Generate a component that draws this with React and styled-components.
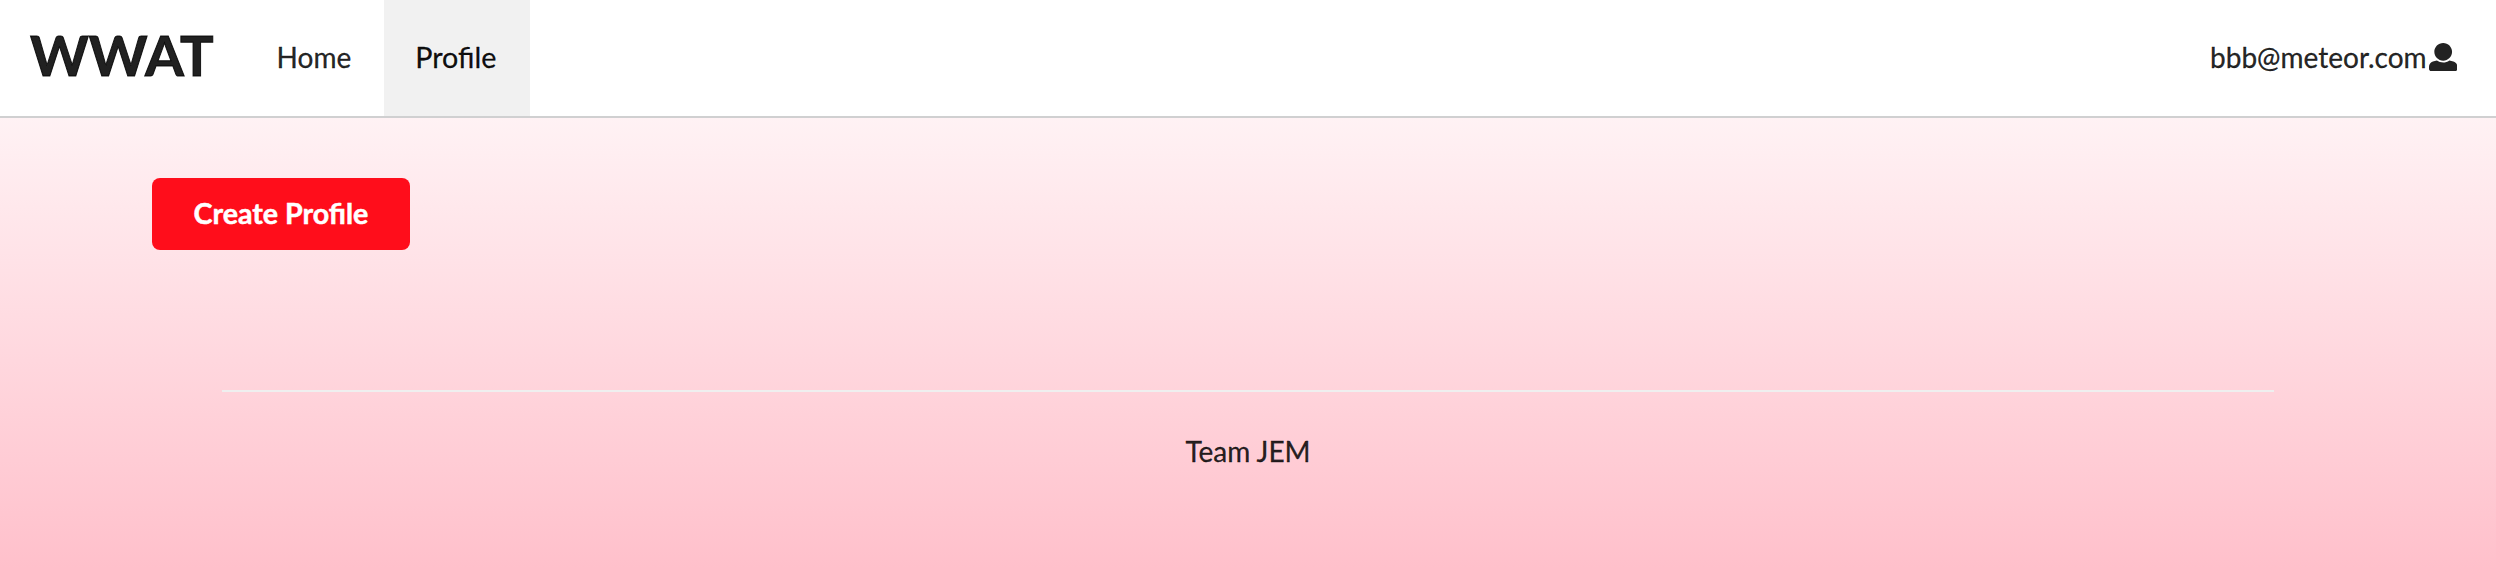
import React from 'react';
import styled, { createGlobalStyle } from 'styled-components';

const Global = createGlobalStyle`
  * { box-sizing: border-box; }
  body { margin: 0; font-family: Lato, "Liberation Sans", sans-serif; font-size: 28px; color: rgba(0,0,0,.87); }
`;
const Page = styled.div`
  height: 568px;
  background: linear-gradient(#ffffff, #ffc0cb);
  overflow: hidden;
`;
const Nav = styled.nav`
  display: flex;
  height: 118px;
  background: #fff;
  border-bottom: 2px solid #d0d0d1;
`;
const Item = styled.a`
  display: flex;
  align-items: center;
  padding: 0 33px 2px 31px;
  line-height: 28px;
  color: ${(p) => (p.$active ? 'rgba(0,0,0,.95)' : 'rgba(0,0,0,.87)')};
  background: ${(p) => (p.$active ? '#f1f1f1' : 'transparent')};
  -webkit-text-stroke: 0.3px currentColor;
  ${(p) => p.$active && 'width: 146px; font-size: 28.7px; padding-right: 0;'}
`;
const Brand = styled.h1`
  margin: 0;
  font-size: 56px;
  line-height: 72px;
  font-weight: 700;
  padding: 19px 32px 0 30px;
  -webkit-text-stroke: 1px currentColor;
`;
const User = styled(Item)`
  margin-left: auto;
  gap: 2px;
  padding: 0 39px 2px 0;
  svg { width: 28.4px; height: 28.4px; fill: #222; }
`;
const Main = styled.main`
  padding: 60px 152px 0;
`;
const Button = styled.button`
  display: block;
  width: 258px;
  height: 72px;
  border: 0;
  border-radius: 8px;
  background: #ff0d1b;
  color: #fff;
  font: 700 28.6px/28px Lato, sans-serif;
  padding: 0 0 2px;
  -webkit-text-stroke: 0.5px currentColor;
`;
const Footer = styled.footer`
  margin: 140px 222px 0;
  padding-top: 39px;
  border-top: 2px solid #efefef;
  text-align: center;
  line-height: 40px;
  -webkit-text-stroke: 0.3px currentColor;
`;

const UserIcon = () => (
  <svg viewBox="0 0 512 512">
    <path d="M256 0c88.366 0 160 71.634 160 160s-71.634 160-160 160S96 248.366 96 160 167.634 0 256 0zm183.283 333.821l-71.313-17.828c-74.923 53.89-165.738 41.864-225.94 0l-71.313 17.828C29.981 344.505 0 382.903 0 426.955V464c0 26.51 21.49 48 48 48h416c26.51 0 48-21.49 48-48v-37.045c0-44.052-29.981-82.45-72.717-93.134z" />
  </svg>
);

export default function App() {
  return (
    <Page>
      <Global />
      <Nav>
        <Brand>WWAT</Brand>
        <Item>Home</Item>
        <Item $active>Profile</Item>
        <User>
          bbb@meteor.com
          <UserIcon />
        </User>
      </Nav>
      <Main><Button>Create Profile</Button></Main>
      <Footer>Team JEM</Footer>
    </Page>
  );
}
